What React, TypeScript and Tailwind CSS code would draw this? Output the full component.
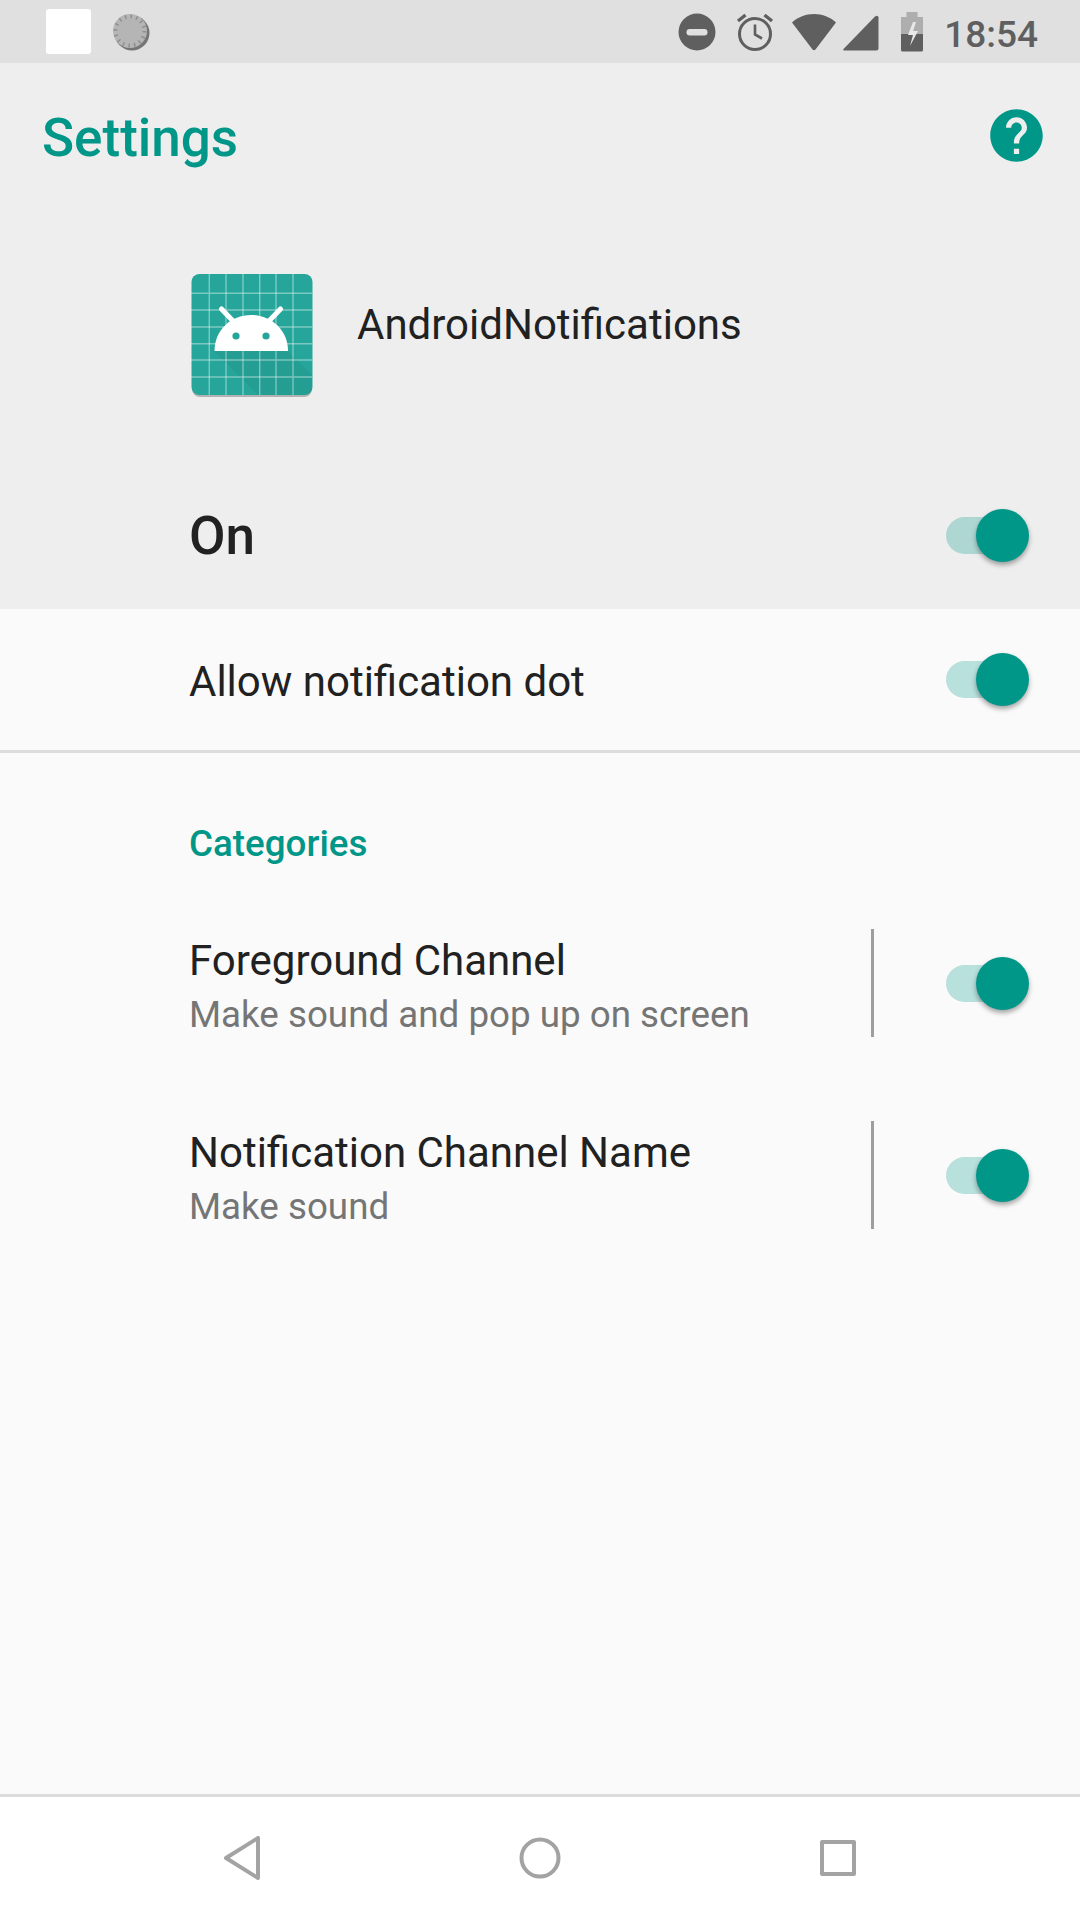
function Toggle({ track }: { track: string }) {
  return (
    <div className="relative h-[53px] w-[83px]">
      <div className={`absolute left-0 top-[8px] h-[37px] w-[80px] rounded-full ${track}`} />
      <div className="absolute left-[30px] top-0 h-[53px] w-[53px] rounded-full bg-[#009688] shadow-[0_3px_5px_rgba(0,0,0,0.35)]" />
    </div>
  );
}

function StatusIcons() {
  return (
    <div className="flex items-center">
      <svg width="38" height="38" viewBox="0 0 38 38" className="mr-[20px]">
        <circle cx="19" cy="19" r="18.5" fill="#5f5f5f" />
        <rect x="8.5" y="16" width="21" height="6.5" rx="3.2" fill="#e0e0e0" />
      </svg>
      <svg width="38" height="38" viewBox="0 0 38 38" className="mr-[17px]">
        <circle cx="19" cy="21" r="15.5" fill="none" stroke="#5f5f5f" strokeWidth="3" />
        <path d="M19 11.5V21.5L26 25.5" fill="none" stroke="#5f5f5f" strokeWidth="2.6" />
        <path d="M2 8L9.5 2M36 8L28.5 2" fill="none" stroke="#5f5f5f" strokeWidth="3.4" />
      </svg>
      <svg width="46" height="38" viewBox="0 0 46 38" className="mr-[6px]">
        <path d="M1 9.5C7 4 14.5 1 23 1s16 3 22 8.5L24.5 36.5q-1.5 1.5-3 0Z" fill="#5f5f5f" />
      </svg>
      <svg width="36" height="36" viewBox="0 0 36 36" className="mr-[21px] mt-[3px]">
        <path d="M1 35.5a1 1 0 0 1-.5-1.5L32 1.5q3-2 3.500 1V33q0 2.500-2.500 2.500Z" fill="#5f5f5f" />
      </svg>
      <svg width="24" height="40" viewBox="0 0 24 40" className="mr-[20px]">
        <rect x="6.500" y="0" width="11" height="5" fill="#aeaeae" />
        <path d="M1 5h22v17H1Z" fill="#aeaeae" />
        <path d="M1 22h22v16a1.500 1.500 0 0 1-1.500 1.500h-19A1.500 1.500 0 0 1 1 38Z" fill="#5f5f5f" />
        <path d="M13 10 8 23h5l-3 11 8-15h-5l3-9Z" fill="#e8e8e8" />
      </svg>
      <span className="mt-[5px] text-[37px] font-medium leading-none text-[#5f5f5f]">18:54</span>
    </div>
  );
}

function AppIcon() {
  const lines = [18.3, 35, 52, 68.7, 85, 102];
  return (
    <svg width="122" height="124" viewBox="0 0 122 124" className="shrink-0">
      <rect x="1" y="2" width="120" height="121" rx="8" fill="#000" opacity="0.25" />
      <rect x="0.500" y="0" width="121" height="121" rx="8" fill="#26a69a" />
      <path d="M23 77H97L121 101V113Q121 121 113 121H67Z" fill="#000" opacity="0.05" />
      {lines.map((p) => (
        <path key={p} d={`M${p} 0V121M0 ${p + 1}H121`} stroke="#fff" strokeOpacity="0.4" strokeWidth="1.400" />
      ))}
      <path d="M30.500 35 42 47M89.500 35 78 47" stroke="#fff" strokeWidth="5" strokeLinecap="round" />
      <path d="M23.500 77C23.500 56 40 41 60 41S97 56 97 77Z" fill="#fff" />
      <circle cx="45" cy="62" r="3.600" fill="#26a69a" />
      <circle cx="75" cy="62" r="3.600" fill="#26a69a" />
    </svg>
  );
}

function ChannelRow({ title, subtitle }: { title: string; subtitle: string }) {
  return (
    <div className="flex h-[192px] items-center pl-[189px] pr-[51px]">
      <div className="flex-1 pt-[10px]">
        <div className="text-[42px] leading-[54px] text-[#212121]">{title}</div>
        <div className="text-[36.75px] leading-[54px] text-[#757575]">{subtitle}</div>
      </div>
      <div className="mr-[72px] h-[108px] w-[3px] bg-[#9e9e9e]" />
      <Toggle track="bg-[#b8e0dc]" />
    </div>
  );
}

export default function App() {
  return (
    <div className="flex h-[1920px] w-[1080px] flex-col bg-[#fafafa] font-['Roboto',sans-serif]">
      <div className="flex h-[63px] shrink-0 items-center justify-between bg-[#e0e0e0] pl-[46px] pr-[42px]">
        <div className="flex items-center">
          <div className="h-[45px] w-[45px] rounded-[3px] bg-white" />
          <svg width="40" height="40" viewBox="0 0 40 40" className="ml-[20px]">
            <circle cx="21" cy="21" r="17.500" fill="#5a5a5a" opacity="0.8" />
            <circle cx="19" cy="19" r="17" fill="#b5b5b5" />
            <circle cx="19" cy="19" r="14.500" fill="none" stroke="#8f8f8f" strokeWidth="4" strokeDasharray="1.500 4.200" />
          </svg>
        </div>
        <StatusIcons />
      </div>

      <div className="h-[546px] shrink-0 bg-[#eeeeee]">
        <div className="flex h-[150px] items-center justify-between pl-[42px] pr-[32px]">
          <span className="mt-[2px] text-[53px] font-medium text-[#009688]">Settings</span>
          <svg width="63" height="63" viewBox="0 0 24 24" fill="#009688" className="mb-[5px]">
            <path d="M12 2C6.480 2 2 6.480 2 12s4.480 10 10 10 10-4.480 10-10S17.520 2 12 2zm1 17h-2v-2h2v2zm2.070-7.750l-.9.920C13.450 12.900 13 13.500 13 15h-2v-.5c0-1.100.45-2.100 1.170-2.830l1.240-1.260c.37-.36.59-.86.59-1.410 0-1.100-.9-2-2-2s-2 .9-2 2H8c0-2.210 1.790-4 4-4s4 1.790 4 4c0 .88-.36 1.680-.93 2.250z" />
          </svg>
        </div>
        <div className="mt-[61px] flex items-center pl-[191px]">
          <AppIcon />
          <span className="mb-[24px] ml-[44px] text-[42px] text-[#212121]">AndroidNotifications</span>
        </div>
        <div className="mt-[110px] flex items-center justify-between pl-[189px] pr-[51px]">
          <span className="mt-[2px] text-[53px] font-medium leading-none text-[#212121]">On</span>
          <Toggle track="bg-[#aed7d3]" />
        </div>
      </div>

      <div className="flex h-[144px] shrink-0 items-center justify-between border-b-[3px] border-[#dcdcdc] pl-[189px] pr-[51px]">
        <span className="mt-[3px] text-[42px] text-[#212121]">Allow notification dot</span>
        <Toggle track="bg-[#b8e0dc]" />
      </div>

      <div className="flex-1">
        <div className="pl-[189px] pt-[67px] text-[36.75px] font-medium leading-[48px] text-[#009688]">Categories</div>
        <div className="mt-[19px]">
          <ChannelRow title="Foreground Channel" subtitle="Make sound and pop up on screen" />
          <ChannelRow title="Notification Channel Name" subtitle="Make sound" />
        </div>
      </div>

      <div className="flex h-[126px] shrink-0 items-center border-t-[3px] border-[#dcdcdc] bg-white pb-[2px]">
        <div className="flex w-full items-center pl-[222px]">
          <svg width="40" height="44" viewBox="0 0 40 44" fill="none" stroke="#a3a3a3" strokeWidth="4" strokeLinejoin="round">
            <path d="M4 22 36 2V42Z" />
          </svg>
          <svg width="44" height="44" viewBox="0 0 44 44" fill="none" stroke="#a3a3a3" strokeWidth="4" className="ml-[256px]">
            <circle cx="22" cy="22" r="18.500" />
          </svg>
          <svg width="38" height="38" viewBox="0 0 38 38" fill="none" stroke="#a3a3a3" strokeWidth="4" strokeLinejoin="round" className="ml-[257px]">
            <rect x="3" y="3" width="32" height="32" />
          </svg>
        </div>
      </div>
    </div>
  );
}
